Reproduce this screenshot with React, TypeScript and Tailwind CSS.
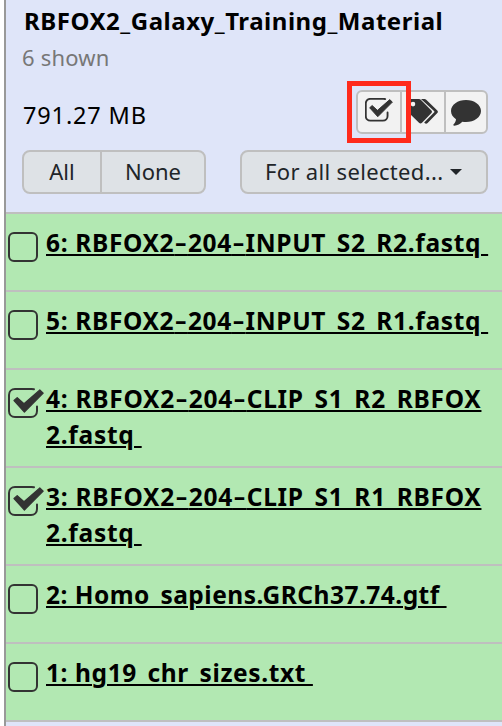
import React from "react";

function CheckIcon({ className, stroke }: { className: string; stroke: number }) {
  return (
    <svg viewBox="0 0 36 32" className={className} fill="none">
      <path
        d="M26 1.300C25.300 1.100 24.500 1 23.500 1H7C3.500 1 1 3.500 1 7v16c0 3.500 2.500 6 6 6h16c3.500 0 6-2.500 6-6v-4.500"
        stroke="#333"
        strokeWidth={stroke}
        strokeLinecap="round"
      />
      <path d="M6 12.500L9.200 9.600L16 15.800L31.800 2L35.200 5.200L16.400 24z" fill="#333" stroke="#333" strokeWidth="1.200" strokeLinejoin="round" />
    </svg>
  );
}

function TagsIcon() {
  return (
    <svg viewBox="0 0 32 28" className="h-7 w-8" fill="#333">
      <path
        fillRule="evenodd"
        d="M1 3.500C1 2 2 1 3.500 1H11c1.400 0 2.600.5 3.500 1.400L24.200 12.200c1 1 1 2 0 3L15 24.800c-1 1-2 1-3 0L1.500 14.500C1.100 14 1 13.500 1 13zM6 3.800a2.300 2.300 0 1 0 0 4.600a2.300 2.300 0 0 0 0-4.600z"
      />
      <path d="M14 1h2.500c1.400 0 2.500.5 3.500 1.400l10.300 10.100c.8.8.8 1.800 0 2.600L20.600 25c-1 .9-2 .9-3 0l-.4-.4L27 14.500c.6-.6.6-1 0-1.600z" />
    </svg>
  );
}

function CommentIcon() {
  return (
    <svg viewBox="0 0 30 26" className="h-[26px] w-[30px]" fill="#333">
      <path d="M15 0C23.300 0 30 4.900 30 11s-6.700 11-15 11c-1.300 0-2.500-.1-3.700-.3C9.300 23.800 6.500 25.300 3.300 25.700c-.9.100-1.300-.8-.7-1.400C4 23 4.800 21.500 5 19.300C2 17.300 0 14.300 0 11C0 4.900 6.700 0 15 0z" />
    </svg>
  );
}

const datasets = [
  { id: 6, name: "RBFOX2-204-INPUT_S2_R2.fastq", checked: false, tracking: "tracking-[0.65px]" },
  { id: 5, name: "RBFOX2-204-INPUT_S2_R1.fastq", checked: false, tracking: "tracking-[0.65px]" },
  { id: 4, name: "RBFOX2-204-CLIP_S1_R2_RBFOX2.fastq", checked: true, tracking: "tracking-[0.73px]" },
  { id: 3, name: "RBFOX2-204-CLIP_S1_R1_RBFOX2.fastq", checked: true, tracking: "tracking-[0.73px]" },
  { id: 2, name: "Homo_sapiens.GRCh37.74.gtf", checked: false, tracking: "tracking-[0.48px]" },
  { id: 1, name: "hg19_chr_sizes.txt", checked: false, tracking: "tracking-[0.6px]" },
];

function Label({ text }: { text: string }) {
  return (
    <>
      {text.split("-").map((part, i) => (
        <React.Fragment key={i}>
          {i > 0 && <span className="align-[-2px] font-['DejaVu_Sans',sans-serif] text-[36px] leading-[0] font-normal">-</span>}
          {part}
        </React.Fragment>
      ))}
    </>
  );
}

export default function App() {
  return (
    <div className="h-[726px] w-[502px] overflow-hidden bg-white pl-1 font-['Noto_Sans',sans-serif] text-black">
      <div className="flex h-full flex-col border-l-2 border-[#999] bg-[#dfe5f9]">
        <header className="flex h-[214px] shrink-0 flex-col border-b-2 border-[#bfbfbf] pl-4 pr-3.5">
          <h1 className="mt-[3px] h-9 pl-0.5 text-2xl leading-9 font-bold tracking-[0.53px] whitespace-nowrap">RBFOX2_Galaxy_Training_Material</h1>
          <div className="h-9 text-[22px] leading-9 tracking-[0.2px] whitespace-nowrap text-[#777]">6 shown</div>
          <div className="mt-[15px] flex h-11 items-center justify-between">
            <span className="pt-1.5 pl-[1px] text-[23.500px] leading-9 tracking-[0.85px] whitespace-nowrap">791.27 MB</span>
            <div className="relative flex h-11 w-[132px] rounded-md border-2 border-[#bfbfbf] bg-[#f2f2f2]">
              <div className="flex w-11 items-start border-r-2 border-[#bfbfbf] pt-1.5 pl-[7px]">
                <CheckIcon className="h-[25px] w-7" stroke={2.4} />
              </div>
              <div className="flex w-11 items-start border-r-2 border-[#bfbfbf] pt-1.5 pl-[5px]">
                <TagsIcon />
              </div>
              <div className="flex flex-1 items-start pt-2 pl-[5px]">
                <CommentIcon />
              </div>
              <div className="absolute -top-[11px] -left-[11px] h-[62px] w-16 border-[5px] border-[#ff2a1c]" />
            </div>
          </div>
          <div className="mt-4 flex h-11 justify-between text-[22px] leading-[38px] text-[#212529]">
            <div className="flex w-[184px] rounded-lg border-2 border-[#bfbfbf] bg-[#dee2e6]">
              <button className="w-[78px] border-r-2 border-[#bfbfbf] pb-0.5">All</button>
              <button className="flex-1 pb-0.5">None</button>
            </div>
            <button className="flex w-[248px] items-center rounded-lg border-2 border-[#bfbfbf] bg-[#dee2e6] pl-[23px] whitespace-nowrap">
              <span className="w-[185px] pb-0.5 text-left tracking-[0.33px]">For all selected...</span>
              <svg viewBox="0 0 12 6" className="h-1.5 w-3" fill="#212529"><path d="M0 0h12L6 6z" /></svg>
            </button>
          </div>
        </header>
        <ul>
          {datasets.map((d) => (
            <li key={d.id} className="flex min-h-[78px] items-start border-b-2 border-[#bfbfbf] bg-[#b2e8b2] pt-[11px] pb-[13px] pl-0.5">
              <span className="mt-[7px] h-[30px] w-[38px] shrink-0">
                {d.checked ? <CheckIcon className="h-8 w-9" stroke={2} /> : <span className="block size-[30px] rounded-[6px] border-2 border-[#333]" />}
              </span>
              <a className={"w-[448px] text-[24.500px] leading-9 font-bold break-all underline decoration-2 underline-offset-2 " + d.tracking}>
                <Label text={`${d.id}: ${d.name}\u00a0`} />
              </a>
            </li>
          ))}
        </ul>
      </div>
    </div>
  );
}
